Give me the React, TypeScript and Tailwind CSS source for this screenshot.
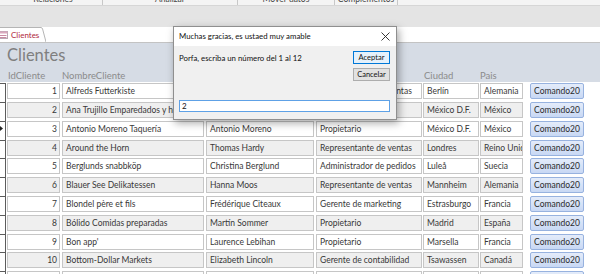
import React from "react";

const rows = [
  ["1", "Alfreds Futterkiste", "Maria Anders", "Representante de ventas", "Berlín", "Alemania"],
  ["2", "Ana Trujillo Emparedados y helados", "Ana Trujillo", "Propietario", "México D.F.", "México"],
  ["3", "Antonio Moreno Taquería", "Antonio Moreno", "Propietario", "México D.F.", "México"],
  ["4", "Around the Horn", "Thomas Hardy", "Representante de ventas", "Londres", "Reino Unido"],
  ["5", "Berglunds snabbköp", "Christina Berglund", "Administrador de pedidos", "Luleå", "Suecia"],
  ["6", "Blauer See Delikatessen", "Hanna Moos", "Representante de ventas", "Mannheim", "Alemania"],
  ["7", "Blondel père et fils", "Frédérique Citeaux", "Gerente de marketing", "Estrasburgo", "Francia"],
  ["8", "Bólido Comidas preparadas", "Martín Sommer", "Propietario", "Madrid", "España"],
  ["9", "Bon app'", "Laurence Lebihan", "Propietario", "Marsella", "Francia"],
  ["10", "Bottom-Dollar Markets", "Elizabeth Lincoln", "Gerente de contabilidad", "Tsawassen", "Canadá"],
  ["11", "B's Beverages", "Victoria Ashworth", "Representante de ventas", "Londres", "Reino Unido"],
];

function Box({ text, w, ml, even, right }: { text: string; w: string; ml: string; even: boolean; right?: boolean }) {
  return (
    <div
      className={`${w} ${ml} h-[16px] shrink-0 overflow-hidden whitespace-nowrap border border-[#c6c6c6] ${
        even ? "bg-[#efefef]" : "bg-white"
      } ${right ? "text-right pr-[2px]" : "pl-[3px]"} text-[8.5px] leading-[14px] text-[#383838]`}
    >
      {text}
    </div>
  );
}

export default function App() {
  return (
    <div className="relative w-[600px] h-[274px] overflow-hidden bg-white font-['Lato',sans-serif]">
      {/* ribbon strip */}
      <div className="h-[6px] bg-[#f4f4f4] border-b border-[#d6d6d6] overflow-hidden flex text-[8.5px] text-[#444] leading-[10px]">
        <div className="w-[103px] border-r border-[#c8c8c8] flex justify-center -mt-[6px] pl-[4px]">Relaciones</div>
        <div className="w-[135px] border-r border-[#c8c8c8] flex justify-center -mt-[6px]">Analizar</div>
        <div className="w-[97px] border-r border-[#c8c8c8] flex justify-center -mt-[6px]">Mover datos</div>
        <div className="w-[63px] border-r border-[#c8c8c8] flex justify-center -mt-[6px]">Complementos</div>
      </div>
      {/* gray band */}
      <div className="h-[21px] bg-[#e4e4e4]" />
      {/* tab strip */}
      <div className="h-[16px] bg-white border-b border-[#c3c3c3] flex items-end">
        <div className="flex h-[15px] items-stretch">
          <div className="flex items-center border-t border-[#b5b5b5] bg-white pr-[1px] gap-[3px] w-[40px]">
            <svg width="9" height="8" viewBox="0 0 9 8" className="-ml-[1px] shrink-0">
              <rect x="0" y="0.5" width="8.5" height="7" fill="#fff" stroke="#b9a7b4" strokeWidth="1" />
              <rect x="0" y="0.5" width="8.5" height="2" fill="#d9a8bd" />
              <line x1="1" y1="4.5" x2="7.5" y2="4.5" stroke="#c98aa3" strokeWidth="1" />
              <line x1="1" y1="6.5" x2="7.5" y2="6.5" stroke="#c98aa3" strokeWidth="1" />
            </svg>
            <span className="text-[8px] text-[#b0283c] leading-none">Clientes</span>
          </div>
          <svg width="6" height="15" viewBox="0 0 6 15" className="shrink-0">
            <path d="M0 0.5 H1 Q2 0.5 2.6 2 L6 15" fill="white" stroke="#b5b5b5" strokeWidth="1" />
          </svg>
        </div>
      </div>
      {/* form header */}
      <div className="h-[39px] bg-[#d6dce5]">
        <div className="pl-[7px] pt-[1px] text-[16.5px] leading-[22px] text-[#7f7f7f]">Clientes</div>
        <div className="flex text-[9.5px] leading-[12px] text-[#8b8b8b] mt-[4px]">
          <div className="w-[62px] pl-[8px]">IdCliente</div>
          <div className="w-[362px]">NombreCliente</div>
          <div className="w-[56px]">Ciudad</div>
          <div>Pais</div>
        </div>
      </div>
      {/* rows */}
      <div className="flex flex-col">
        {rows.map((r, i) => {
          const even = i % 2 === 1;
          return (
            <div key={i} className="h-[18.8px] shrink-0 flex items-start pt-[1.3px]">
              <div className="w-[6px] h-[18.8px] shrink-0 border-t border-r border-[#5c5c5c] bg-white flex items-center">
                {i === 2 && (
                  <svg width="3" height="5" viewBox="0 0 3 5" className="-mt-[4px]">
                    <path d="M0 0 L3 2.5 L0 5 Z" fill="#222" />
                  </svg>
                )}
              </div>
              <Box text={r[0]} w="w-[53px]" ml="ml-[1px]" even={even} right />
              <Box text={r[1]} w="w-[142px]" ml="ml-[2px]" even={even} />
              <Box text={r[2]} w="w-[108px]" ml="ml-[2px]" even={even} />
              <Box text={r[3]} w="w-[106px]" ml="ml-[2px]" even={even} />
              <Box text={r[4]} w="w-[56px]" ml="ml-[1px]" even={even} />
              <Box text={r[5]} w="w-[43px]" ml="ml-[1px]" even={even} />
              <div className="ml-[7px] w-[54px] h-[16px] shrink-0 rounded-[2px] border border-[#97b2df] bg-gradient-to-b from-[#e4ecfa] to-[#c8d8f4] text-[8.5px] leading-[14px] text-[#2b2b2b] text-center whitespace-nowrap">
                Comando20
              </div>
            </div>
          );
        })}
      </div>

      {/* dialog */}
      <div className="absolute left-[173px] top-[26px] w-[224px] h-[94px] border border-[#8f8f8f] bg-[#f0f0f0] shadow-[2px_3px_8px_rgba(0,0,0,0.35)] flex flex-col">
        <div className="h-[19px] bg-white flex items-center justify-between pl-[5px] pr-[6px] text-[7.8px] text-[#111]">
          <span>Muchas gracias, es ustaed muy amable</span>
          <svg width="9" height="9" viewBox="0 0 9 9">
            <path d="M0.5 0.5 L8.5 8.5 M8.5 0.5 L0.5 8.5" stroke="#222" strokeWidth="0.9" />
          </svg>
        </div>
        <div className="flex-1 flex flex-col pl-[5px] pr-[6px]">
          <div className="flex justify-between pt-[5px]">
            <div className="text-[7.8px] leading-[12px] text-[#111] pt-[1px]">Porfa, escriba un número del 1 al 12</div>
            <div className="flex flex-col gap-[4px]">
              <div className="w-[37px] h-[13px] border border-[#0078d7] bg-[#e5f1fb] text-[7.5px] leading-[11px] text-center text-[#111]">
                Aceptar
              </div>
              <div className="w-[37px] h-[13px] border border-[#adadad] bg-[#e1e1e1] text-[7.5px] leading-[11px] text-center text-[#111]">
                Cancelar
              </div>
            </div>
          </div>
          <div className="mt-[19px] h-[12px] w-[211px] border border-[#5ea1e6] bg-white text-[8px] leading-[10px] pl-[2px] text-[#111]">
            2
          </div>
        </div>
      </div>
    </div>
  );
}
